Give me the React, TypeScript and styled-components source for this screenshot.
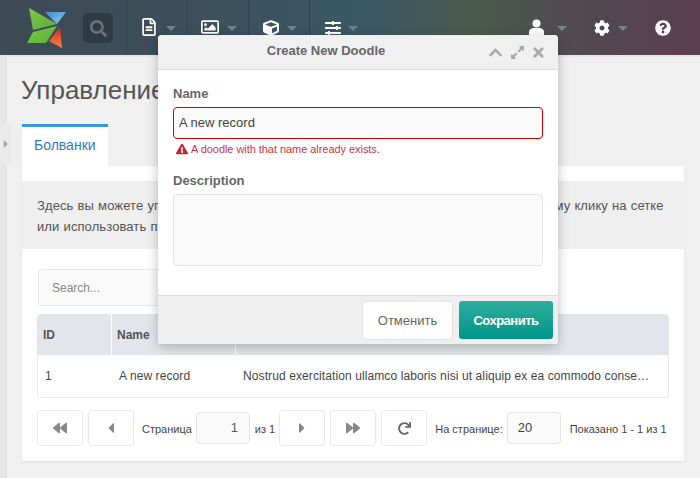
import React from "react";
import styled, { createGlobalStyle } from "styled-components";
import {
  FaRegFileAlt, FaRegImage, FaCube, FaSlidersH, FaCog, FaQuestionCircle, FaSearch,
  FaChevronUp, FaExpandAlt, FaTimes, FaExclamationTriangle, FaBackward, FaForward, FaCaretLeft, FaCaretRight, FaRedo,
} from "react-icons/fa";

const Global = createGlobalStyle`
  html, body { margin: 0; padding: 0; width: 700px; height: 478px; overflow: hidden; }
  body { font-family: "Liberation Sans", Arial, sans-serif; background: #f0f0f0; }
  * { box-sizing: border-box; }
`;

const Page = styled.div`
  position: relative;
  width: 700px;
  height: 478px;
  overflow: hidden;
  display: flex;
  flex-direction: column;
  background: #e6e6e6;
`;

const Navbar = styled.header`
  height: 57px;
  flex: none;
  display: flex;
  align-items: stretch;
  background: linear-gradient(90deg, #3e4a54 0%, #3c4e5a 25%, #3b5866 52%, #4b5a4e 68%, #504c50 80%, #5b3e50 100%) top / 100% 55px no-repeat;
`;

const LogoBox = styled.div`
  width: 83px;
  flex: none;
  padding: 7px 0 0 26px;
`;

const SearchButton = styled.div`
  width: 30px;
  height: 30px;
  margin: 13px 13px 0 0;
  border-radius: 5px;
  background: #2f3a42;
  color: #66737c;
  font-size: 17px;
  display: flex;
  align-items: center;
  justify-content: center;
`;

type NavProps = { $pad: number; $gap: number; $size?: number; $iconTop?: number };

const NavItem = styled.div<NavProps>`
  width: 61px;
  height: 55px;
  flex: none;
  border-left: 1px solid #2f4353;
  display: flex;
  align-items: flex-start;
  padding: 18px 0 0 ${(p) => p.$pad}px;
  gap: ${(p) => p.$gap}px;
  color: #fff;
  font-size: ${(p) => p.$size ?? 18}px;
  svg { margin-top: ${(p) => p.$iconTop ?? 0}px; }
  &:last-of-type { border-right: 1px solid #2f4353; }
`;

const Caret = styled.span`
  width: 0;
  height: 0;
  margin-top: 8px;
  border-left: 5px solid transparent;
  border-right: 5px solid transparent;
  border-top: 5px solid #6f8390;
`;

const NavRight = styled.div`
  margin-left: auto;
  display: flex;
`;

const NavTool = styled.div<NavProps>`
  width: 61px;
  height: 55px;
  flex: none;
  display: flex;
  align-items: flex-start;
  padding: 18px 0 0 ${(p) => p.$pad}px;
  gap: ${(p) => p.$gap}px;
  color: #fff;
  font-size: ${(p) => p.$size ?? 16}px;
  svg { margin-top: ${(p) => p.$iconTop ?? 0}px; }
`;

const Body = styled.div`
  flex: 1;
  margin-left: 7px;
  background: #f0f0f0;
  padding: 18px 16px 0 15px;
  display: flex;
  flex-direction: column;
`;

const Title = styled.h1`
  margin: 0 0 0 -1px;
  font-size: 26px;
  line-height: 30px;
  font-weight: 400;
  color: #555;
  white-space: nowrap;
`;

const Tabs = styled.div`
  margin-top: 19px;
  display: flex;
`;

const Tab = styled.div`
  width: 86px;
  height: 42px;
  background: #fff;
  border-top: 3px solid #3498db;
  color: #337ab7;
  font-size: 14px;
  line-height: 37px;
  padding-left: 12px;
`;

const Panel = styled.section`
  width: 662px;
  height: 295px;
  background: #fff;
  padding-top: 15px;
  box-shadow: 0 1px 2px rgba(0, 0, 0, 0.06);
`;

const Info = styled.div`
  height: 68px;
  background: #efefef;
  padding: 14px 15px;
  font-size: 13px;
  line-height: 21px;
  color: #555;
  letter-spacing: 0.1px;
  word-spacing: 0.4px;
  p { margin: 0; white-space: nowrap; }
`;

const SearchInput = styled.div`
  margin: 20px 0 0 16px;
  width: 200px;
  height: 37px;
  border: 1px solid #e8e8e8;
  border-radius: 4px;
  background: #fafafa;
  color: #888;
  font-size: 12px;
  line-height: 36px;
  padding-left: 13px;
`;

const Grid = styled.div`
  margin: 8px 15px 0;
  border: 1px solid #e8e8e8;
  border-top: 0;
  border-radius: 4px;
  overflow: hidden;
`;

const GridRow = styled.div<{ $head?: boolean }>`
  display: grid;
  grid-template-columns: 73px 124px 1fr;
  height: ${(p) => (p.$head ? 41 : 42)}px;
  background: ${(p) => (p.$head ? "#e2e6ea" : "#fff")};
  color: ${(p) => (p.$head ? "#555" : "#444")};
  font-size: 12px;
  font-weight: ${(p) => (p.$head ? 700 : 400)};
  letter-spacing: ${(p) => (p.$head ? 0 : 0.1)}px;
  align-items: center;
`;

const Cell = styled.div<{ $head?: boolean }>`
  height: 100%;
  padding-left: ${(p) => (p.$head ? 5 : 7)}px;
  display: flex;
  align-items: center;
  border-left: 1px solid ${(p) => (p.$head ? "#fff" : "transparent")};
  min-width: 0;
  &:first-child { border-left: 0; }
  overflow: hidden;
  white-space: nowrap;
`;

const Pager = styled.div`
  margin: 12px 15px 0;
  display: flex;
  align-items: center;
  height: 36px;
  font-size: 11px;
  color: #444;
  white-space: nowrap;
`;

const PagerButton = styled.div<{ $dark?: boolean; $size?: number; $gap?: number }>`
  width: 46px;
  height: 36px;
  border: 1px solid #e8e8e8;
  border-radius: 4px;
  background: #fff;
  color: ${(p) => (p.$dark ? "#666" : "#888")};
  font-size: ${(p) => p.$size ?? 14}px;
  display: flex;
  align-items: center;
  justify-content: center;
  margin-right: ${(p) => p.$gap ?? 5}px;
`;

const PagerLabel = styled.span<{ $l: number; $r: number }>`
  margin: 2px ${(p) => p.$r}px 0 ${(p) => p.$l}px;
`;

const PagerInput = styled.div<{ $w: number; $right?: boolean }>`
  width: ${(p) => p.$w}px;
  height: 32px;
  border: 1px solid #e5e5e5;
  border-radius: 4px;
  background: #fafafa;
  font-size: 13px;
  line-height: 29px;
  color: ${(p) => (p.$right ? "#40597a" : "#444")};
  text-align: ${(p) => (p.$right ? "right" : "left")};
  padding: 0 11px 0 10px;
`;

const Toggle = styled.div`
  position: absolute;
  left: 0;
  top: 124px;
  width: 11px;
  height: 40px;
  background: #eaeaea;
  border-radius: 0 3px 3px 0;
  color: #9aa5ad;
  font-size: 12px;
  display: flex;
  align-items: center;
  padding-left: 1px;
`;

const Modal = styled.div`
  position: absolute;
  left: 158px;
  top: 35px;
  width: 400px;
  height: 309px;
  background: #fff;
  border-radius: 4px 4px 3px 3px;
  box-shadow: 0 3px 12px rgba(0, 0, 0, 0.25);
  display: flex;
  flex-direction: column;
`;

const ModalHeader = styled.div`
  height: 35px;
  flex: none;
  position: relative;
  background: #f0f0f0;
  border-bottom: 1px solid #ddd;
  border-radius: 4px 4px 0 0;
  color: #666;
  font-size: 13px;
  font-weight: 700;
  line-height: 32px;
  text-align: center;
  padding-right: 64px;
`;

const ModalTools = styled.div`
  position: absolute;
  right: 12px;
  top: 10px;
  display: flex;
  align-items: center;
  gap: 6.5px;
  color: #a8a8a8;
  font-size: 15px;
`;

const ModalBody = styled.div`
  flex: 1;
  padding: 16px 15px 0;
`;

const Label = styled.label`
  display: block;
  font-size: 13px;
  line-height: 16px;
  font-weight: 700;
  color: #666;
  margin-bottom: 5px;
`;

const TextInput = styled.div`
  height: 32px;
  border: 1px solid #c00;
  border-radius: 4px;
  background: #fafafa;
  color: #444;
  font-size: 13px;
  line-height: 30px;
  padding-left: 5px;
`;

const ErrorText = styled.div`
  margin: 3px 0 17px 3px;
  font-size: 11px;
  line-height: 14px;
  letter-spacing: -0.05px;
  color: #c7364a;
  display: flex;
  align-items: center;
  gap: 3px;
  svg { color: #c0283a; font-size: 12px; }
`;

const TextArea = styled.div`
  height: 72px;
  border: 1px solid #e5e5e5;
  border-radius: 4px;
  background: #fafafa;
`;

const ModalFooter = styled.div`
  height: 49px;
  flex: none;
  background: #efefef;
  border-top: 1px solid #ddd;
  border-radius: 0 0 3px 3px;
  display: flex;
  justify-content: flex-end;
  gap: 6px;
  padding: 5px 5px 0 0;
`;

const Cancel = styled.button`
  width: 91px;
  height: 39px;
  border: 1px solid #e5e5e5;
  border-radius: 4px;
  background: #fff;
  color: #666;
  font: 400 13px "Liberation Sans", Arial, sans-serif;
`;

const Save = styled.button`
  width: 94px;
  height: 38px;
  border: 0;
  border-radius: 3px;
  background: linear-gradient(180deg, #2fad9d 0%, #00968a 100%);
  color: #fff;
  font: 700 13px "Liberation Sans", Arial, sans-serif;
  letter-spacing: -0.5px;
`;

const Logo = () => (
  <svg width="42" height="42" viewBox="0 0 42 42" aria-hidden="true">
    <defs>
      <linearGradient id="lg1" x1="0" y1="0" x2="1" y2="1">
        <stop offset="0" stopColor="#7dc948" />
        <stop offset="1" stopColor="#5aae3c" />
      </linearGradient>
      <linearGradient id="lb" x1="0" y1="0" x2="1" y2="1">
        <stop offset="0" stopColor="#3e8fd0" />
        <stop offset="1" stopColor="#8ec8ee" />
      </linearGradient>
      <linearGradient id="lr" x1="0" y1="0" x2="0" y2="1">
        <stop offset="0" stopColor="#d81f26" />
        <stop offset="1" stopColor="#f58a42" />
      </linearGradient>
    </defs>
    <polygon points="3,1 31,17 7,23" fill="url(#lg1)" />
    <polygon points="19,5 40,5 31,17" fill="url(#lb)" />
    <polygon points="7,25 31,19 20,36 1,36" fill="url(#lg1)" />
    <polygon points="34,20 36,41 23,34" fill="url(#lr)" />
  </svg>
);

const UserIcon = () => (
  <svg width="15" height="20" viewBox="0 0 15 20" aria-hidden="true" fill="#fff">
    <circle cx="7.5" cy="5.5" r="4" />
    <path d="M0 19 V14 C0 11 3 10 5 10 H10 C12 10 15 11 15 14 V19 Z" />
  </svg>
);

export default function App() {
  return (
    <Page>
      <Global />
      <Navbar>
        <LogoBox><Logo /></LogoBox>
        <SearchButton><FaSearch /></SearchButton>
        <NavItem $pad={13} $gap={8}><FaRegFileAlt /><Caret /></NavItem>
        <NavItem $pad={13} $gap={8}><FaRegImage /><Caret /></NavItem>
        <NavItem $pad={14} $gap={8} $size={16} $iconTop={2}><FaCube /><Caret /></NavItem>
        <NavItem $pad={15} $gap={7} $size={16} $iconTop={2}><FaSlidersH /><Caret /></NavItem>
        <NavRight>
          <NavTool $pad={12} $gap={13}><UserIcon /><Caret /></NavTool>
          <NavTool $pad={16} $gap={8} $iconTop={2}><FaCog /><Caret /></NavTool>
          <NavTool $pad={16} $gap={0} $iconTop={2}><FaQuestionCircle /></NavTool>
        </NavRight>
      </Navbar>
      <Body>
        <Title>Управление</Title>
        <Tabs><Tab>Болванки</Tab></Tabs>
        <Panel>
          <Info>
            <p>Здесь вы можете управлять записями. Вы можете редактировать записи по двойному клику на сетке</p>
            <p>или использовать прочие действия</p>
          </Info>
          <SearchInput>Search...</SearchInput>
          <Grid>
            <GridRow $head><Cell $head>ID</Cell><Cell $head>Name</Cell><Cell $head>Description</Cell></GridRow>
            <GridRow>
              <Cell>1</Cell>
              <Cell>A new record</Cell>
              <Cell>Nostrud exercitation ullamco laboris nisi ut aliquip ex ea commodo conse…</Cell>
            </GridRow>
          </Grid>
          <Pager>
            <PagerButton><FaBackward /></PagerButton>
            <PagerButton $gap={0} $size={16}><FaCaretLeft /></PagerButton>
            <PagerLabel $l={8} $r={4}>Страница</PagerLabel>
            <PagerInput $w={54} $right>1</PagerInput>
            <PagerLabel $l={5} $r={4}>из 1</PagerLabel>
            <PagerButton $size={16}><FaCaretRight /></PagerButton>
            <PagerButton><FaForward /></PagerButton>
            <PagerButton $gap={0} $dark $size={13}><FaRedo /></PagerButton>
            <PagerLabel $l={8} $r={4}>На странице:</PagerLabel>
            <PagerInput $w={54}>20</PagerInput>
            <PagerLabel $l={9} $r={0}>Показано 1 - 1 из 1</PagerLabel>
          </Pager>
        </Panel>
      </Body>
      <Toggle><FaCaretRight /></Toggle>
      <Modal>
        <ModalHeader>
          Create New Doodle
          <ModalTools><FaChevronUp /><FaExpandAlt /><FaTimes /></ModalTools>
        </ModalHeader>
        <ModalBody>
          <Label>Name</Label>
          <TextInput>A new record</TextInput>
          <ErrorText><FaExclamationTriangle />A doodle with that name already exists.</ErrorText>
          <Label>Description</Label>
          <TextArea />
        </ModalBody>
        <ModalFooter>
          <Cancel>Отменить</Cancel>
          <Save>Сохранить</Save>
        </ModalFooter>
      </Modal>
    </Page>
  );
}
